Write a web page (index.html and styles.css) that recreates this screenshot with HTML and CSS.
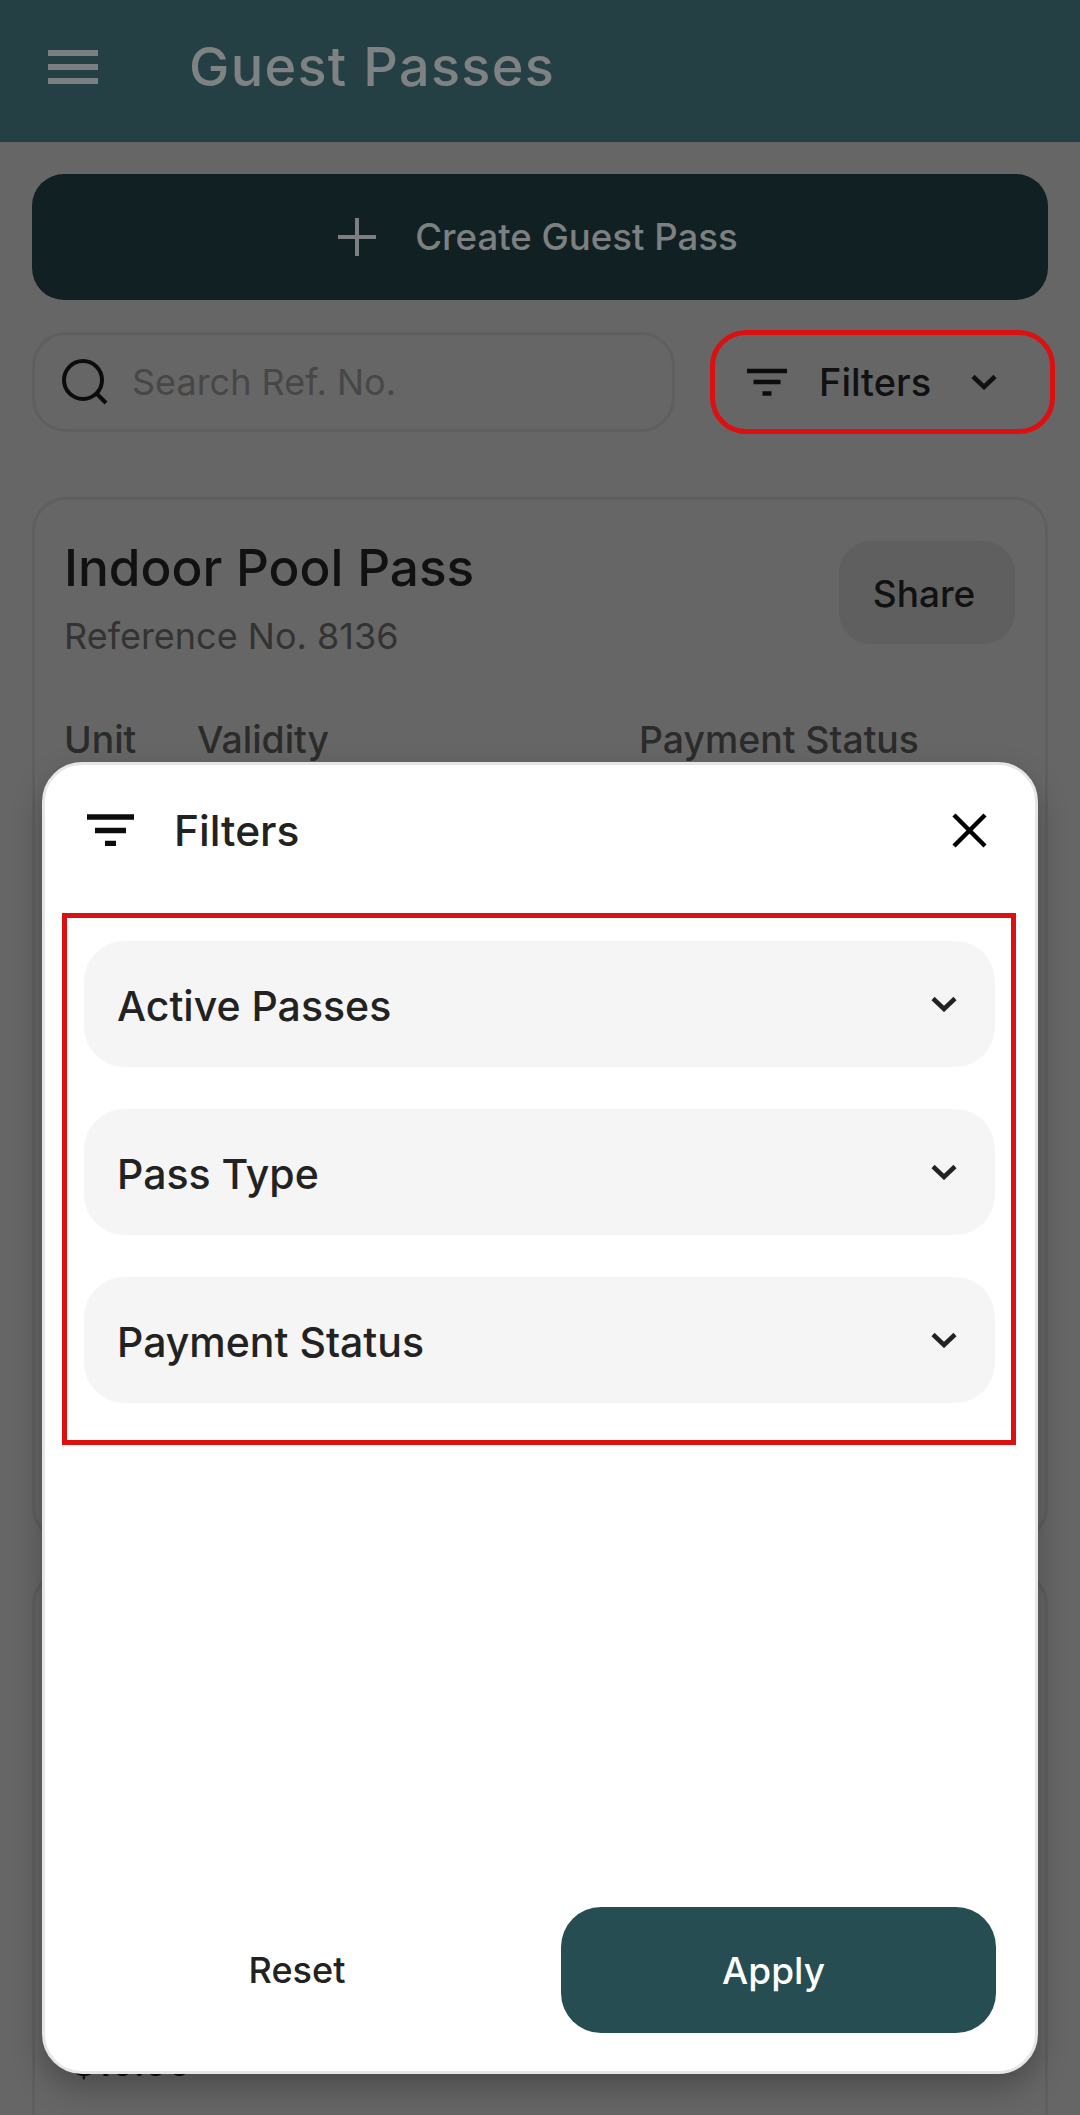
FILE: index.html
```html
<!DOCTYPE html>
<html lang="en">
<head>
<meta charset="utf-8">
<title>Guest Passes</title>
<link rel="stylesheet" href="styles.css">
</head>
<body>
<div class="screen">
  <header class="appbar">
    <svg class="menu-icon" viewBox="0 0 50 34"><path d="M0 3H50M0 17H50M0 31H50"/></svg>
    <h1 class="appbar-title">Guest Passes</h1>
  </header>
  <main class="content">
    <button class="create-btn">
      <svg class="plus-icon" viewBox="0 0 38 38"><path d="M19 0V38M0 19H38"/></svg>
      <span>Create Guest Pass</span>
    </button>
    <div class="toolbar">
      <div class="search">
        <svg class="search-icon" viewBox="0 0 46 46"><circle cx="21" cy="21" r="19"/><path d="M34.500 34.500L44 44"/></svg>
        <span>Search Ref. No.</span>
      </div>
      <button class="filter-btn">
        <svg class="filter-icon" viewBox="0 0 40 28"><path d="M0 3H40M6.500 14H33.500M15.500 25.500H24.500"/></svg>
        <span>Filters</span>
        <svg class="chevron" viewBox="0 0 26 16"><path d="M2 2.500L13 13L24 2.500"/></svg>
      </button>
    </div>
    <section class="card">
      <div class="card-top">
        <div>
          <h2 class="card-title">Indoor Pool Pass</h2>
          <p class="card-ref">Reference No. 8136</p>
        </div>
        <span class="share">Share</span>
      </div>
      <div class="card-meta">
        <span class="meta-unit">Unit</span>
        <span class="meta-validity">Validity</span>
        <span>Payment Status</span>
      </div>
    </section>
    <section class="card card-second">
      <p class="card-price">$10.00</p>
    </section>
  </main>

  <aside class="sheet">
    <div class="sheet-head">
      <svg class="sheet-filter" viewBox="0 0 47 32"><path d="M0 3H47M8 16.500H39M18 29.500H29"/></svg>
      <span class="sheet-title">Filters</span>
      <svg class="close-icon" viewBox="0 0 35 35"><path d="M2 2L33 33M33 2L2 33"/></svg>
    </div>
    <div class="filter-list">
      <div class="filter-row"><span>Active Passes</span><svg class="chevron" viewBox="0 0 26 16"><path d="M2 2.500L13 13L24 2.500"/></svg></div>
      <div class="filter-row"><span>Pass Type</span><svg class="chevron" viewBox="0 0 26 16"><path d="M2 2.500L13 13L24 2.500"/></svg></div>
      <div class="filter-row"><span>Payment Status</span><svg class="chevron" viewBox="0 0 26 16"><path d="M2 2.500L13 13L24 2.500"/></svg></div>
    </div>
    <div class="sheet-actions">
      <button class="reset-btn">Reset</button>
      <button class="apply-btn">Apply</button>
    </div>
  </aside>
</div>
</body>
</html>
```
FILE: styles.css
```css
* { box-sizing: border-box; margin: 0; padding: 0; }
html, body { width: 1080px; height: 2115px; overflow: hidden; }
body { background: #666666; font-family: "Inter", "Liberation Sans", sans-serif; color: #141414; }
button { font: inherit; border: 0; background: none; color: inherit; }
svg { display: block; fill: none; flex: none; }
.screen { position: relative; width: 1080px; height: 2115px; overflow: hidden; }

.appbar { height: 142px; background: #254045; display: flex; align-items: center; padding: 0 0 8px 48px; }
.menu-icon { width: 50px; height: 34px; }
.menu-icon path { stroke: #7b7f80; stroke-width: 6; }
.appbar-title { margin-left: 91px; font-size: 54px; font-weight: 500; color: #7f8282; line-height: 1; letter-spacing: 1.300px; }

.content { padding: 32px 32px 0; }
.create-btn { width: 1016px; height: 126px; padding-right: 4px; border-radius: 32px; background: #112023; display: flex; align-items: center; justify-content: center; gap: 39px; color: #7d8080; font-size: 36.600px; font-weight: 500; }
.plus-icon { width: 38px; height: 38px; }
.plus-icon path { stroke: #7d8080; stroke-width: 4; }

.toolbar { margin-top: 32px; display: flex; align-items: center; gap: 35px; height: 100px; }
.search { width: 643px; height: 100px; border: 3px solid #5f5f5f; border-radius: 34px; display: flex; align-items: center; padding-left: 27px; gap: 24px; color: #474747; font-size: 36px; flex: none; }
.search-icon { width: 46px; height: 46px; }
.search-icon circle, .search-icon path { stroke: #0c0c0c; stroke-width: 4; }
.filter-btn { width: 345px; height: 104px; margin-right: -7px; flex: none; border: 5px solid #dc1010; border-radius: 36px; display: flex; align-items: center; padding-left: 32px; font-size: 38px; font-weight: 500; color: #111111; }
.filter-icon { width: 40px; height: 28px; margin-right: 32px; }
.filter-icon path { stroke: #0c0c0c; stroke-width: 4.500; }
.filter-btn .chevron { margin-left: 40px; }
.chevron { width: 26px; height: 16px; }
.chevron path { stroke: currentColor; stroke-width: 4.500; }

.card { margin-top: 65px; height: 1044px; border: 3px solid #5f5f5f; border-radius: 34px; padding: 38px 30px 39px 29px; }
.card-top { display: flex; justify-content: space-between; align-items: flex-start; }
.card-title { font-size: 51.300px; font-weight: 500; line-height: 58px; color: #111111; }
.card-ref { margin-top: 18px; font-size: 36px; line-height: 44px; color: #333333; }
.share { margin-top: 3px; width: 176px; height: 103px; padding: 2px 6px 0 0; border-radius: 32px; background: #5f5f5f; display: flex; align-items: center; justify-content: center; font-size: 37px; font-weight: 500; color: #111111; }
.card-meta { margin-top: 60px; display: flex; font-size: 37.400px; font-weight: 500; line-height: 44px; color: #2b2b2b; }
.meta-unit { width: 133px; }
.meta-validity { width: 442px; }
.card-second { margin-top: 30px; position: relative; }
.card-price { position: absolute; left: 37px; top: 467px; font-size: 36px; font-weight: 600; color: #0c0c0c; line-height: 44px; }

.sheet { position: absolute; left: 42px; top: 762px; width: 996px; height: 1312px; background: #ffffff; border-radius: 40px; border: 3px solid #e6e6e6; box-shadow: 0 14px 30px rgba(0,0,0,.26); display: flex; flex-direction: column; }
.sheet-head { height: 130px; margin-bottom: 18px; display: flex; align-items: center; padding: 0 48px 0 42px; flex: none; }
.sheet-filter { width: 47px; height: 32px; margin-right: 40px; }
.sheet-filter path { stroke: #0c0c0c; stroke-width: 5.500; }
.sheet-title { font-size: 42.500px; font-weight: 500; color: #222222; flex: 1; }
.close-icon { width: 35px; height: 35px; }
.close-icon path { stroke: #000000; stroke-width: 4.500; }
.filter-list { margin-left: 17px; width: 954px; height: 532px; border: 5px solid #dc1010; padding: 23px 16px 0 17px; display: flex; flex-direction: column; gap: 42px; flex: none; }
.filter-row { height: 126px; flex: none; border-radius: 40px; background: #f5f5f5; display: flex; align-items: center; justify-content: space-between; padding: 0 38px 0 33px; font-size: 41px; font-weight: 500; color: #222222; }
.filter-row span { padding-top: 3px; }
.sheet-actions { margin-top: auto; margin-bottom: 38px; display: flex; align-items: center; padding: 0 39px 0 0; flex: none; }
.reset-btn { width: 504px; margin-right: 12px; height: 126px; font-size: 36px; font-weight: 500; color: #222222; }
.apply-btn { width: 435px; height: 126px; padding: 0 10px 0 0; border-radius: 40px; background: #264e52; color: #ffffff; font-size: 37px; font-weight: 500; }
```
